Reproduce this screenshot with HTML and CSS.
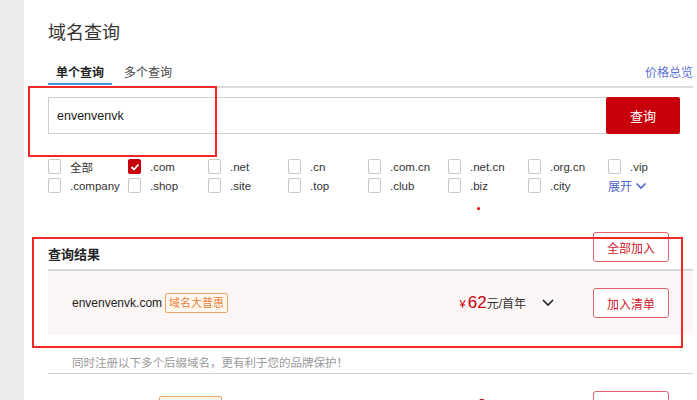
FILE: index.html
```html
<!DOCTYPE html>
<html lang="zh-CN">
<head>
    <meta charset="UTF-8">
    <meta name="viewport" content="width=device-width, initial-scale=1.0">
    <title>域名查询</title>
    <link rel="stylesheet" href="styles.css">
</head>
<body>
    <div class="sidebar"></div>
    <div class="main">
        <h1 class="title">域名查询</h1>

        <div class="tabs">
            <div class="tab active">单个查询</div>
            <div class="tab">多个查询</div>
            <a class="price-link" href="#">价格总览</a>
        </div>

        <div class="search">
            <div class="search-input">envenvenvk</div>
            <button class="search-btn">查询</button>
        </div>

        <div class="suffixes">
            <label class="suffix"><span class="box"></span>全部</label>
            <label class="suffix"><span class="box checked"><svg width="10" height="8" viewBox="0 0 10 8"><polyline points="1.5,4 4,6.5 8.5,1.5" fill="none" stroke="#fff" stroke-width="1.8"/></svg></span>.com</label>
            <label class="suffix"><span class="box"></span>.net</label>
            <label class="suffix"><span class="box"></span>.cn</label>
            <label class="suffix"><span class="box"></span>.com.cn</label>
            <label class="suffix"><span class="box"></span>.net.cn</label>
            <label class="suffix"><span class="box"></span>.org.cn</label>
            <label class="suffix"><span class="box"></span>.vip</label>
            <label class="suffix"><span class="box"></span>.company</label>
            <label class="suffix"><span class="box"></span>.shop</label>
            <label class="suffix"><span class="box"></span>.site</label>
            <label class="suffix"><span class="box"></span>.top</label>
            <label class="suffix"><span class="box"></span>.club</label>
            <label class="suffix"><span class="box"></span>.biz</label>
            <label class="suffix"><span class="box"></span>.city</label>
            <a class="expand" href="#">展开<svg width="12" height="8" viewBox="0 0 12 8"><polyline points="1.5,1.5 6,6 10.5,1.5" fill="none" stroke="#4d66d4" stroke-width="1.6"/></svg></a>
        </div>

        <div class="results">
            <div class="results-head">
                <span class="results-title">查询结果</span>
                <button class="btn-outline">全部加入</button>
            </div>

            <div class="result-row highlight">
                <span class="domain">envenvenvk.com</span>
                <span class="badge">域名大普惠</span>
                <span class="price"><span class="yen">¥</span><span class="amount">62</span>元/首年</span>
                <svg class="chevron" width="12" height="8" viewBox="0 0 12 8"><polyline points="1,1 6,6 11,1" fill="none" stroke="#222" stroke-width="1.6"/></svg>
                <button class="btn-outline">加入清单</button>
            </div>

            <div class="hint">同时注册以下多个后缀域名，更有利于您的品牌保护！</div>

            <div class="result-row">
                <span class="domain">envenvenvk.net</span>
                <span class="badge">域名大普惠</span>
                <span class="price"><span class="yen">¥</span><span class="amount">9</span>元/首年</span>
                <svg class="chevron" width="12" height="8" viewBox="0 0 12 8"><polyline points="1,1 6,6 11,1" fill="none" stroke="#222" stroke-width="1.6"/></svg>
                <button class="btn-outline">加入清单</button>
            </div>
        </div>

        <div class="mark mark-search"></div>
        <div class="mark mark-result"></div>
        <div class="dot"></div>
    </div>
</body>
</html>
```

FILE: styles.css
```css
body {
    margin: 0;
    display: flex;
    font-family: "Liberation Sans", "Noto Sans CJK SC", sans-serif;
    color: #333;
    background-color: #fff;
    overflow: hidden;
}

.sidebar {
    width: 24px;
    min-height: 100vh;
    background-color: #ececec;
    flex-shrink: 0;
}

.main {
    flex: 1;
    position: relative;
    padding: 0 4px 0 24px;
}

.title {
    margin: 20px 0 0;
    font-size: 18px;
    font-weight: normal;
    line-height: 26px;
    color: #333;
}

.tabs {
    display: flex;
    align-items: flex-end;
    margin-top: 18px;
    padding-bottom: 1px;
    border-bottom: 2px solid #dcdcdc;
}

.tab {
    padding: 0 8px 1px;
    margin-right: 4px;
    font-size: 12px;
    line-height: 18px;
    color: #444;
    border-bottom: 2px solid transparent;
}

.tab.active {
    font-weight: bold;
    color: #222;
    border-bottom-color: #4d8fe0;
}

.price-link {
    margin-left: auto;
    font-size: 12px;
    line-height: 18px;
    padding-bottom: 3px;
    color: #5b6fd0;
    text-decoration: none;
}

.search {
    display: flex;
    height: 37px;
    margin: 9px 13px 0 0;
}

.search-input {
    flex: 1;
    display: flex;
    align-items: center;
    padding-left: 8px;
    font-size: 12.5px;
    color: #222;
    border: 1px solid #cfcfcf;
    border-right: none;
}

.search-btn {
    width: 74px;
    border: none;
    border-radius: 2px;
    background-color: #c7000b;
    color: #fff;
    font-family: inherit;
    font-size: 13px;
}

.suffixes {
    display: grid;
    grid-template-columns: repeat(8, 80px);
    grid-auto-rows: 15px;
    row-gap: 4px;
    margin-top: 25px;
}

.suffix {
    display: flex;
    align-items: center;
    font-size: 11.5px;
    color: #333;
}

.box {
    box-sizing: border-box;
    width: 13px;
    height: 15px;
    margin-right: 9px;
    border: 1px solid #c9c9c9;
    border-radius: 2px;
    display: flex;
    align-items: center;
    justify-content: center;
}

.box.checked {
    background-color: #c7000b;
    border-color: #c7000b;
}

.expand {
    display: flex;
    align-items: center;
    gap: 3px;
    font-size: 12px;
    color: #4d66d4;
    text-decoration: none;
}

.results {
    margin-top: 39px;
}

.results-head {
    display: flex;
    align-items: flex-end;
    justify-content: space-between;
    padding: 0 24px 7px 0;
    border-bottom: 2px solid #d8d8d8;
}

.results-title {
    font-size: 13px;
    font-weight: bold;
    line-height: 14px;
    color: #222;
}

.btn-outline {
    width: 76px;
    height: 30px;
    border: 1px solid #e0646a;
    border-radius: 3px;
    background-color: #fff;
    color: #d2222b;
    font-family: inherit;
    font-size: 12px;
}

.result-row {
    display: flex;
    align-items: center;
    height: 64px;
    padding: 0 24px;
}

.result-row.highlight {
    background-color: #fcf6f6;
}

.domain {
    font-size: 12px;
    color: #222;
}

.badge {
    margin-left: 3px;
    padding: 0 3px;
    height: 20px;
    line-height: 19px;
    box-sizing: border-box;
    border: 1px solid #eea66a;
    border-radius: 2px;
    background-color: #fff7ee;
    color: #e8843a;
    font-size: 11px;
}

.price {
    margin-left: auto;
    font-size: 12px;
    color: #333;
}

.yen {
    color: #c7000b;
    font-size: 11px;
    margin-right: 2px;
}

.amount {
    color: #c7000b;
    font-size: 17px;
}

.chevron {
    margin: 0 39px 0 16px;
}

.hint {
    padding: 19px 0 1px 24px;
    font-size: 11.5px;
    line-height: 18px;
    color: #999;
    border-bottom: 1px solid #cfcfd6;
}

.mark {
    position: absolute;
    box-sizing: border-box;
    border: 2px solid #f02828;
}

.mark-search {
    left: 4px;
    top: 86px;
    width: 189px;
    height: 71px;
}

.mark-result {
    left: 8px;
    top: 237px;
    width: 651px;
    height: 111px;
}

.dot {
    position: absolute;
    left: 453px;
    top: 207px;
    width: 3px;
    height: 3px;
    border-radius: 50%;
    background-color: #e00;
}
```
